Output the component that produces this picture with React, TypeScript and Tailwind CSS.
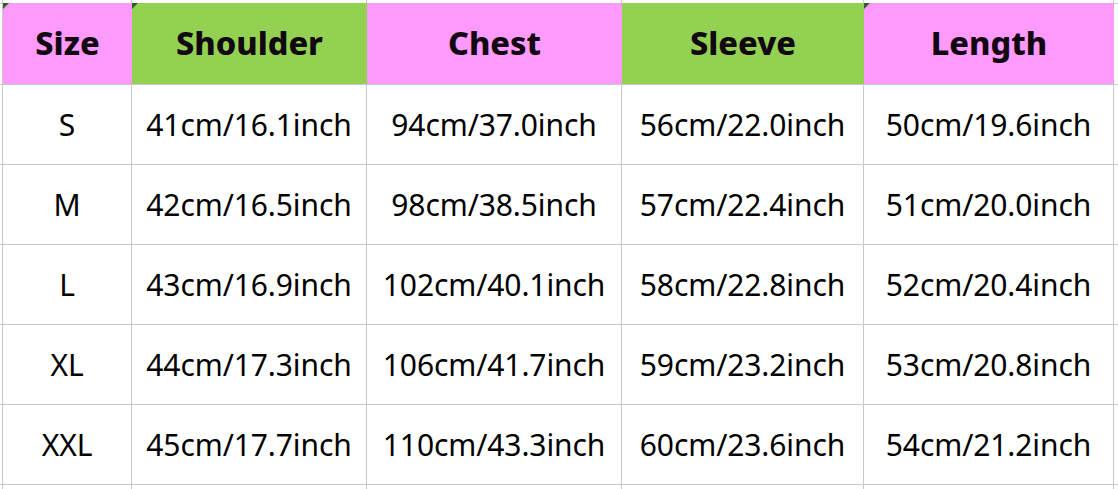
const headers = [
  { label: "Size", bg: "bg-[#fe9afc]", mark: true },
  { label: "Shoulder", bg: "bg-[#93d152]", mark: true },
  { label: "Chest", bg: "bg-[#fe9afc]", mark: false },
  { label: "Sleeve", bg: "bg-[#93d152]", mark: false },
  { label: "Length", bg: "bg-[#fe9afc]", mark: true },
];

const rows = [
  ["S", "41cm/16.1inch", "94cm/37.0inch", "56cm/22.0inch", "50cm/19.6inch"],
  ["M", "42cm/16.5inch", "98cm/38.5inch", "57cm/22.4inch", "51cm/20.0inch"],
  ["L", "43cm/16.9inch", "102cm/40.1inch", "58cm/22.8inch", "52cm/20.4inch"],
  ["XL", "44cm/17.3inch", "106cm/41.7inch", "59cm/23.2inch", "53cm/20.8inch"],
  ["XXL", "45cm/17.7inch", "110cm/43.3inch", "60cm/23.6inch", "54cm/21.2inch"],
];

// blank spreadsheet cell (edges of the sheet)
const Blank = () => <div className="bg-white" />;

export default function App() {
  return (
    <div className="w-[1118px] h-[489px] overflow-hidden bg-white font-['Noto_Sans',sans-serif] text-black">
      <div className="grid h-full grid-cols-[2px_128px_234px_254px_241px_249px_1fr] grid-rows-[3px_80px_79px_79px_79px_79px_79px_1fr] gap-px bg-[#c8c8c8]">
        {/* top strip */}
        {Array.from({ length: 7 }).map((_, i) => (
          <Blank key={`t${i}`} />
        ))}

        {/* header */}
        <Blank />
        {headers.map((h) => (
          <div
            key={h.label}
            className={`relative -mt-px -mr-px flex items-center justify-center ${h.bg} text-[32.5px] font-extrabold text-[#120812]`}
          >
            {h.mark && (
              <span className="absolute left-0 top-0 h-0 w-0 border-t-[6px] border-r-[6px] border-t-[#2f5f2a] border-r-transparent" />
            )}
            {h.label}
          </div>
        ))}
        <Blank />

        {/* body rows */}
        {rows.map((r) => (
          <>
            <Blank key={`l${r[0]}`} />
            {r.map((c, i) => (
              <div
                key={`${r[0]}-${i}`}
                className="flex items-center justify-center bg-white text-[30px] tracking-[-0.1px]"
              >
                {c}
              </div>
            ))}
            <Blank key={`r${r[0]}`} />
          </>
        ))}

        {/* bottom strip */}
        {Array.from({ length: 7 }).map((_, i) => (
          <Blank key={`b${i}`} />
        ))}
      </div>
    </div>
  );
}
